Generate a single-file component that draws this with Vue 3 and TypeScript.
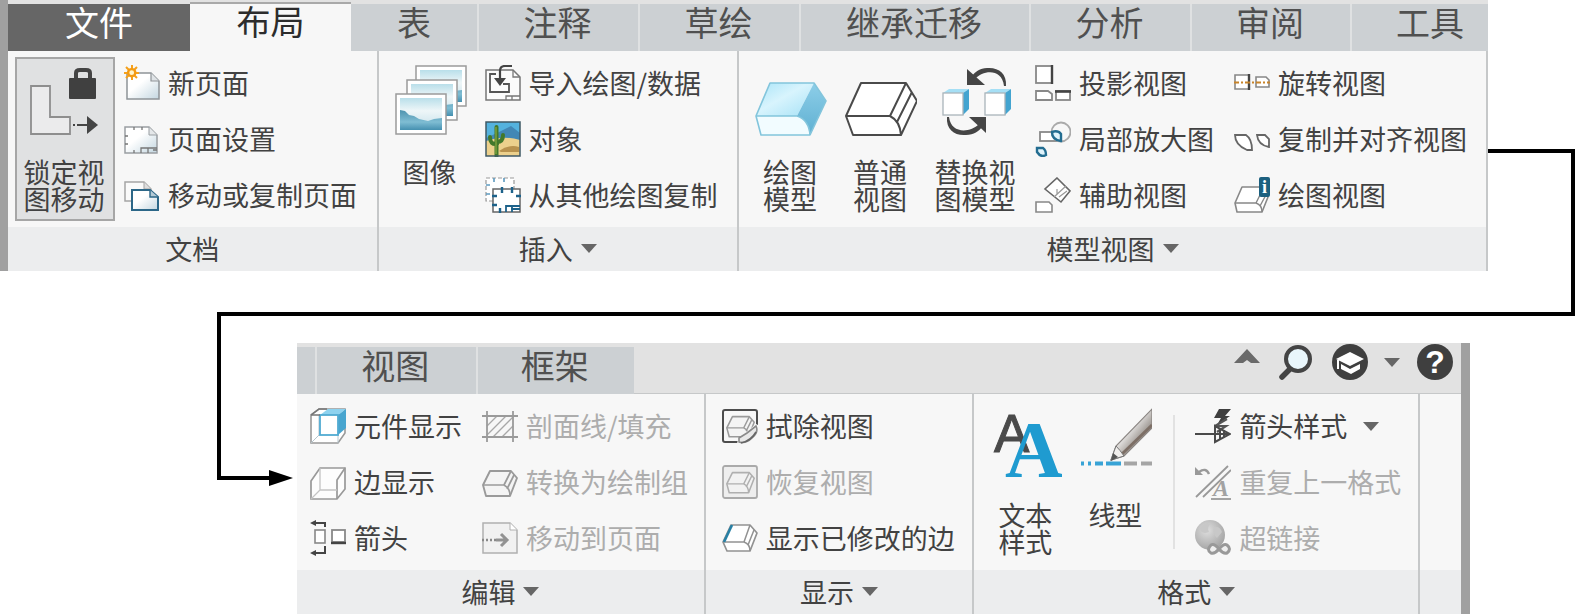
<script setup lang="ts">
interface Command {
  id: string
  label: string[]
  disabled?: boolean
  active?: boolean
  wide?: boolean
  menu?: boolean
}

interface Group {
  title: string
  menu: boolean
  share: number
  large: Command[]
  separated?: boolean
  columns: Command[][]
}

interface Tab {
  label: string
  share: number
  kind?: 'file' | 'current' | 'cut'
}

interface Letter {
  text: string
  x: number
  y: number
  size: number
  kind: string
}

// Letters that are part of an icon, in the icon's own units
const letters: Record<string, Letter[]> = {
  'text-style': [
    { text: 'A', x: 4, y: 44, size: 53, kind: 'letter-plain' },
    { text: 'A', x: 15, y: 69, size: 80, kind: 'letter-blue' },
  ],
  'drawing-view': [{ text: 'i', x: 28, y: 16, size: 18, kind: 'letter-info' }],
  repeat: [{ text: 'A', x: 18, y: 32, size: 24, kind: 'letter-faded' }],
}

const upperTabs: Tab[] = [
  { label: '文件', share: 182, kind: 'file' },
  { label: '布局', share: 161, kind: 'current' },
  { label: '表', share: 126 },
  { label: '注释', share: 161 },
  { label: '草绘', share: 161 },
  { label: '继承迁移', share: 230 },
  { label: '分析', share: 161 },
  { label: '审阅', share: 160 },
  { label: '工具', share: 138, kind: 'cut' },
]

const lowerTabs: Tab[] = [
  { label: '视图', share: 160 },
  { label: '框架', share: 158 },
]

const upperGroups: Group[] = [
  {
    title: '文档',
    menu: false,
    share: 370,
    large: [{ id: 'lock', label: ['锁定视', '图移动'], active: true, wide: true }],
    columns: [
      [
        { id: 'new-page', label: ['新页面'] },
        { id: 'page-setup', label: ['页面设置'] },
        { id: 'copy-page', label: ['移动或复制页面'] },
      ],
    ],
  },
  {
    title: '插入',
    menu: true,
    share: 360,
    large: [{ id: 'images', label: ['图像'] }],
    columns: [
      [
        { id: 'import', label: ['导入绘图/数据'] },
        { id: 'object', label: ['对象'] },
        { id: 'copy-drawing', label: ['从其他绘图复制'] },
      ],
    ],
  },
  {
    title: '模型视图',
    menu: true,
    share: 750,
    large: [
      { id: 'model', label: ['绘图', '模型'] },
      { id: 'general', label: ['普通', '视图'] },
      { id: 'replace', label: ['替换视', '图模型'], wide: true },
    ],
    columns: [
      [
        { id: 'projection', label: ['投影视图'] },
        { id: 'detail', label: ['局部放大图'] },
        { id: 'auxiliary', label: ['辅助视图'] },
      ],
      [
        { id: 'revolved', label: ['旋转视图'] },
        { id: 'align', label: ['复制并对齐视图'] },
        { id: 'drawing-view', label: ['绘图视图'] },
      ],
    ],
  },
]

const lowerGroups: Group[] = [
  {
    title: '编辑',
    menu: true,
    share: 409,
    large: [],
    columns: [
      [
        { id: 'component', label: ['元件显示'] },
        { id: 'edge', label: ['边显示'] },
        { id: 'arrows', label: ['箭头'] },
      ],
      [
        { id: 'hatch', label: ['剖面线/填充'], disabled: true },
        { id: 'convert', label: ['转换为绘制组'], disabled: true },
        { id: 'to-page', label: ['移动到页面'], disabled: true },
      ],
    ],
  },
  {
    title: '显示',
    menu: true,
    share: 268,
    large: [],
    columns: [
      [
        { id: 'erase', label: ['拭除视图'] },
        { id: 'restore', label: ['恢复视图'], disabled: true },
        { id: 'modified', label: ['显示已修改的边'] },
      ],
    ],
  },
  {
    title: '格式',
    menu: true,
    share: 446,
    separated: true,
    large: [
      { id: 'text-style', label: ['文本', '样式'] },
      { id: 'line-style', label: ['线型'] },
    ],
    columns: [
      [
        { id: 'arrow-style', label: ['箭头样式'], menu: true },
        { id: 'repeat', label: ['重复上一格式'], disabled: true },
        { id: 'link', label: ['超链接'], disabled: true },
      ],
    ],
  },
]

const ribbons = [
  { key: 'upper', tabs: upperTabs, groups: upperGroups },
  { key: 'lower', tabs: lowerTabs, groups: lowerGroups },
]
</script>

<template>
  <main class="page">
    <svg class="sprite" width="0" height="0" aria-hidden="true">
      <defs>
        <linearGradient id="g-paper" x1="0" y1="0" x2="1" y2="1">
          <stop offset="0.4" stop-color="#ffffff" />
          <stop offset="1" stop-color="#c3d6e0" />
        </linearGradient>
        <linearGradient id="g-ice" x1="0" y1="0" x2="1" y2="1">
          <stop offset="0" stop-color="#a9e4f8" />
          <stop offset="0.45" stop-color="#d8f4fd" />
          <stop offset="1" stop-color="#a5e1f6" />
        </linearGradient>
        <linearGradient id="g-side" x1="0" y1="0" x2="0" y2="1">
          <stop offset="0" stop-color="#8dcee8" />
          <stop offset="1" stop-color="#5fb0d2" />
        </linearGradient>
        <linearGradient id="g-sky" x1="0" y1="0" x2="0" y2="1">
          <stop offset="0" stop-color="#b9dfea" />
          <stop offset="0.4" stop-color="#eef6f8" />
          <stop offset="1" stop-color="#c2dfe9" />
        </linearGradient>
        <linearGradient id="g-lake" x1="0" y1="0" x2="0" y2="1">
          <stop offset="0" stop-color="#4e93ae" />
          <stop offset="0.6" stop-color="#7fbdd3" />
          <stop offset="1" stop-color="#4590b0" />
        </linearGradient>
        <linearGradient id="g-pen" x1="0" y1="0" x2="1" y2="1">
          <stop offset="0.35" stop-color="#ffffff" />
          <stop offset="0.7" stop-color="#8d8680" />
        </linearGradient>
        <radialGradient id="g-globe" cx="0.4" cy="0.35" r="0.7">
          <stop offset="0" stop-color="#dedede" />
          <stop offset="1" stop-color="#a2a2a2" />
        </radialGradient>
      </defs>

      <symbol id="i-lock" viewBox="0 0 72 72">
        <path d="M2 21H21V52H41V69H2Z" fill="#ebebec" stroke="#8e8e8e" stroke-width="1.8" />
        <path d="M47 15V8q0-3 4-3h6q4 0 4 3v7" fill="none" stroke="#444" stroke-width="4" />
        <rect x="40" y="13" width="27" height="21" rx="1" fill="#404040" />
        <path d="M44 60h2M48 60h10" stroke="#444" stroke-width="2" />
        <path d="M58 51L69 60L58 69Z" fill="#444" />
      </symbol>
      <symbol id="i-new-page" viewBox="0 0 36 36">
        <path d="M3 8H27L35 16V34H3Z" fill="url(#g-paper)" stroke="#8f9498" stroke-width="1.5" />
        <path d="M27 8V16H35" fill="#dfe3e6" stroke="#8f9498" stroke-width="1.2" />
        <path d="M8 0V15M0 8H15M2 2L13 13M13 2L2 13" stroke="#f5a11c" stroke-width="2" />
        <circle cx="7.700" cy="7.700" r="3.600" fill="#fff3c8" stroke="#f39a12" stroke-width="2.400" />
      </symbol>
      <symbol id="i-page-setup" viewBox="0 0 36 36">
        <path d="M1 6H25L33 14V32H1Z" fill="url(#g-paper)" stroke="#9a9fa3" stroke-width="1.5" />
        <path d="M25 6V14H33" fill="#e4e7e9" stroke="#9a9fa3" />
        <path d="M10 6v3M18 6v3M1 15h3M1 23h3M10 32v-3M17 32V27H33M24 27v5M29 29h4" stroke="#777" stroke-width="1.300" fill="none" />
      </symbol>
      <symbol id="i-copy-page" viewBox="0 0 36 36">
        <path d="M1 5H20L27 12V24H1Z" fill="#fafafa" stroke="#a5a5a5" stroke-width="1.500" />
        <path d="M20 5V12H27" fill="#ddd" stroke="#a5a5a5" />
        <path d="M8 13H26L34 20V33H8Z" fill="url(#g-paper)" stroke="#2c6788" stroke-width="2" />
        <path d="M26 13V20H34" fill="#b4cad6" stroke="#2c6788" stroke-width="1.400" />
      </symbol>
      <symbol id="i-photo" viewBox="0 0 52 42">
        <rect x="1" y="1" width="50" height="40" fill="#fff" stroke="#9b9b9b" stroke-width="1.500" />
        <rect x="5" y="5" width="42" height="32" fill="url(#g-sky)" />
        <path d="M5 17L10 18L14 22L19 23L24 26L33 28L39 26L47 25V37H5Z" fill="url(#g-lake)" />
      </symbol>
      <symbol id="i-images" viewBox="0 0 72 72">
        <use href="#i-photo" x="20" y="0" width="52" height="42" />
        <use href="#i-photo" x="11" y="14" width="52" height="42" />
        <use href="#i-photo" x="0" y="28" width="52" height="42" />
      </symbol>
      <symbol id="i-import" viewBox="0 0 36 36">
        <path d="M1 5H28L35 12V35H1Z" fill="#fbfbfb" stroke="#777" stroke-width="1.500" />
        <path d="M28 5V12H35M21 35V31H35M27 31v4" fill="none" stroke="#777" stroke-width="1.300" />
        <path d="M11 9H5V27H24V19H18" fill="none" stroke="#555" stroke-width="1.800" />
        <path d="M27 1H20Q15 1 15 6V14" fill="none" stroke="#444" stroke-width="2.200" />
        <path d="M9 13H21L15 21Z" fill="#444" />
      </symbol>
      <symbol id="i-object" viewBox="0 0 36 36">
        <rect x="1" y="1" width="34" height="34" fill="#54b2de" />
        <path d="M1 17L12 12L26 5L35 12V22H1Z" fill="#4287b5" />
        <path d="M1 20Q18 14 35 19V35H1Z" fill="#ecd08c" />
        <path d="M14 30Q24 23 34 26V31H16Z" fill="#b8924e" />
        <path d="M11.500 35V6M12 23Q5 24 5 16M12 21Q18 21 18 14" fill="none" stroke="#42782b" stroke-width="4" stroke-linecap="round" />
        <path d="M11 33V6" stroke="#8cab42" stroke-width="1.200" />
        <rect x="1" y="1" width="34" height="34" fill="none" stroke="#3f5966" stroke-width="1.500" />
      </symbol>
      <symbol id="i-copy-drawing" viewBox="0 0 36 36">
        <rect x="1" y="1" width="28" height="23" fill="#fff" stroke="#999" stroke-width="1.200" stroke-dasharray="4 2" />
        <path d="M9 1v4M19 1v4M1 8h4M1 17h4" stroke="#5d9ac0" stroke-width="1.600" />
        <rect x="8" y="12" width="27" height="23" fill="#fff" stroke="#666" stroke-width="1.500" />
        <path d="M17 10v6M27 10v6M7 19h5M7 28h5M31 19h5M15 36v-5" stroke="#1d628a" stroke-width="2.400" />
        <path d="M21 35V29H35M26 32H35M27 30v5" stroke="#1d628a" stroke-width="1.800" fill="none" />
      </symbol>
      <symbol id="i-model" viewBox="0 0 72 72">
        <path d="M15 18H59L42 51H1Z" fill="url(#g-ice)" />
        <path d="M59 18L71 36L55 70Q54 55 42 51Z" fill="url(#g-side)" />
        <path d="M1 51H42Q54 55 55 70H6Z" fill="#f2fcff" />
        <path d="M15 18H59L71 36L55 70H6L1 51ZM1 51H42Q54 55 55 70" fill="none" stroke="#83c5dc" stroke-width="1.600" stroke-linejoin="round" />
      </symbol>
      <symbol id="i-general" viewBox="0 0 72 72">
        <path d="M16 18H61L72 36L56 70H8L1 51Z" fill="#fff" />
        <path d="M16 18H61L72 36L56 70H8L1 51ZM1 51H45Q55 56 56 70M45 51L61 18M52 57L67 27" fill="none" stroke="#4a4a4a" stroke-width="2" stroke-linejoin="round" />
      </symbol>
      <symbol id="i-cube" viewBox="0 0 28 28">
        <path d="M1 5L7 1H27L21 5Z" fill="#a5dff5" />
        <path d="M21 5L27 1V21L21 27Z" fill="#43a4d0" />
        <rect x="1" y="5" width="20" height="22" fill="#fff" stroke="#aab4ba" stroke-width="1.300" />
      </symbol>
      <symbol id="i-replace" viewBox="0 0 72 72">
        <use href="#i-cube" x="2" y="23" width="28" height="28" />
        <use href="#i-cube" x="44" y="23" width="28" height="28" />
        <path d="M66 21C67 8 58 2 47 3C40 3 35 7 32 11L35 14C43 5 62 3 64 21Z" fill="#454545" />
        <path d="M27 4V20H45Z" fill="#454545" />
        <path d="M7 52C6 65 15 71 26 70C34 70 39 66 42 62L39 59C30 68 11 69 9 52Z" fill="#454545" />
        <path d="M46 68V52H29Z" fill="#454545" />
      </symbol>
      <symbol id="i-projection" viewBox="0 0 36 36">
        <rect x="1" y="1" width="16" height="17" fill="#fff" stroke="#888" stroke-width="1.800" />
        <path d="M17 0V19" stroke="#444" stroke-width="2.400" />
        <path d="M1 26H13L17 29V35H1Z" fill="#fff" stroke="#888" stroke-width="1.800" />
        <rect x="21" y="26" width="14" height="9" fill="#fff" stroke="#888" stroke-width="1.800" />
        <path d="M20 26.500H36" stroke="#444" stroke-width="2.600" />
      </symbol>
      <symbol id="i-detail" viewBox="0 0 36 36">
        <rect x="5" y="11" width="19" height="9" fill="#fff" stroke="#888" stroke-width="1.800" />
        <circle cx="26" cy="11" r="9.500" fill="none" stroke="#aaa" stroke-width="1.800" />
        <path d="M17 11Q17 19 26 20V13Q23 9 17 11Z" fill="#dff3fb" stroke="#236d91" stroke-width="2.400" />
        <path d="M2 27H8Q11 29 11 34Q6 37 2 31Z" fill="#dff3fb" stroke="#236d91" stroke-width="2.400" />
      </symbol>
      <symbol id="i-auxiliary" viewBox="0 0 36 36">
        <path d="M22 1L35 14L26 25L10 12Z" fill="#fff" stroke="#666" stroke-width="1.600" />
        <path d="M19 20L31 9M22 17V12M24 20L32 14" stroke="#999" stroke-width="1.200" />
        <path d="M1 25H14L17 28V35H1Z" fill="#fff" stroke="#888" stroke-width="1.600" />
      </symbol>
      <symbol id="i-revolved" viewBox="0 0 36 36">
        <path d="M1 10H15V24H1Z" fill="#fff" stroke="#888" stroke-width="1.600" />
        <path d="M15 9V25" stroke="#444" stroke-width="2.400" />
        <path d="M22 12H32L35 15V22H22Z" fill="#fff" stroke="#888" stroke-width="1.600" />
        <path d="M0 17.500H36" stroke="#c8842a" stroke-width="2" stroke-dasharray="5 2 2 2" />
      </symbol>
      <symbol id="i-align" viewBox="0 0 36 36">
        <path d="M1 14H12Q18 18 18 29H13Q1 24 1 14Z" fill="#fff" stroke="#666" stroke-width="1.800" />
        <path d="M23 14H31L35 18V26Q24 24 23 14Z" fill="#fff" stroke="#666" stroke-width="1.800" />
      </symbol>
      <symbol id="i-drawing-view" viewBox="0 0 36 36">
        <path d="M8 10H31L34 20L28 35H3L1 26Z" fill="#fff" stroke="#888" stroke-width="1.600" stroke-linejoin="round" />
        <path d="M1 26H22Q28 28 28 35M22 26L29 12M26 29L33 16" fill="none" stroke="#888" stroke-width="1.400" />
        <rect x="25" y="0" width="11" height="20" rx="2" fill="#1c607f" />
      </symbol>

      <symbol id="i-component" viewBox="0 0 36 36">
        <path d="M1 7L9 1H35V25L28 35H1Z" fill="#fff" stroke="#999" stroke-width="1.600" />
        <path d="M1 35L9 27V7M28 35V27" fill="none" stroke="#b6c5cd" />
        <path d="M10 7L18 1H36L28 7Z" fill="#8dd2ef" />
        <path d="M28 7L36 1V20L28 27Z" fill="#48a5cf" />
        <rect x="10" y="7" width="18" height="20" fill="#fff" stroke="#51abd2" stroke-width="1.800" />
        <path d="M1 7H10M1 7L9 1H17" fill="none" stroke="#777" stroke-width="1.500" />
      </symbol>
      <symbol id="i-edge" viewBox="0 0 36 36">
        <path d="M1 17L10 4H35V25L27 35H1Z" fill="#fdfdfd" stroke="#999" stroke-width="1.700" />
        <path d="M27 35V16L35 4" fill="none" stroke="#999" stroke-width="1.700" />
        <path d="M10 4V26L1 35M10 26H27" fill="none" stroke="#c4c4c4" stroke-width="1.300" />
      </symbol>
      <symbol id="i-arrows" viewBox="0 0 36 36">
        <rect x="5" y="10" width="10" height="13" fill="#fff" stroke="#888" stroke-width="1.600" />
        <rect x="22" y="10" width="13" height="12" fill="#fff" stroke="#888" stroke-width="1.800" />
        <path d="M21 23H36" stroke="#444" stroke-width="2.400" />
        <path d="M15 7V3H4M15 26V33H4" fill="none" stroke="#444" stroke-width="2" />
        <path d="M0 3L6 0V6ZM0 33L6 30V36Z" fill="#444" />
      </symbol>
      <symbol id="i-hatch" viewBox="0 0 36 36">
        <path d="M5 18L15 8M5 27L24 8M11 29L31 9M20 29L31 18" stroke="#a8a8a8" stroke-width="1.300" />
        <path d="M0 8H36M0 29H36M5 3V34M31 3V34" stroke="#9a9a9a" stroke-width="1.800" />
      </symbol>
      <symbol id="i-box" viewBox="0 0 36 36">
        <path d="M8 7H29L35 14L28 32H4L1 21Z" fill="#f4f4f4" stroke="#9a9a9a" stroke-width="1.900" stroke-linejoin="round" />
        <path d="M1 21H22Q28 24 28 32M22 21L29 7M25 25L32 11" fill="none" stroke="#9a9a9a" stroke-width="1.700" />
      </symbol>
      <symbol id="i-convert" viewBox="0 0 36 36"><use href="#i-box" width="36" height="36" /></symbol>
      <symbol id="i-to-page" viewBox="0 0 36 36">
        <path d="M1 3H28L35 10V33H1Z" fill="#f1f1f1" stroke="#b0b0b0" stroke-width="1.500" />
        <path d="M28 3V10H35" fill="#fff" stroke="#b0b0b0" />
        <path d="M0 20H14" stroke="#888" stroke-width="2.400" stroke-dasharray="2 2" />
        <path d="M14 20H25M19 14L25 20L19 26" fill="none" stroke="#929292" stroke-width="3" />
      </symbol>
      <symbol id="i-erase" viewBox="0 0 36 36">
        <rect x="1" y="2" width="34" height="32" rx="2" fill="#f8f8f8" stroke="#4d4d4d" stroke-width="2" />
        <use href="#i-box" x="4" y="3" width="29" height="29" />
        <path d="M16 31L34 16L38 18V36H15Z" fill="#f7f7f7" />
        <path d="M17 30L25 25L34 18Q37 24 30 30Q24 36 17 34Z" fill="#e8e8e8" stroke="#8a8a8a" stroke-width="1.600" />
        <path d="M19 35Q29 33 34 24" fill="none" stroke="#666" stroke-width="1.600" />
      </symbol>
      <symbol id="i-restore" viewBox="0 0 36 36">
        <rect x="1" y="2" width="34" height="32" rx="2" fill="#eee" stroke="#aaa" stroke-width="1.800" />
        <use href="#i-box" x="4" y="3" width="29" height="29" opacity="0.750" />
      </symbol>
      <symbol id="i-modified" viewBox="0 0 36 36">
        <path d="M9 5H28L35 13L28 31H5L1 22Z" fill="#fff" stroke="#929292" stroke-width="1.700" stroke-linejoin="round" />
        <path d="M1 22H22Q28 24 28 31M22 22L28 5M26 25L32 10" fill="none" stroke="#929292" stroke-width="1.500" />
        <path d="M10 5L2 22" stroke="#2780a5" stroke-width="2.600" />
      </symbol>
      <symbol id="i-text-style" viewBox="0 0 72 72"></symbol>
      <symbol id="i-line-style" viewBox="0 0 72 72">
        <path d="M31 52L36 38L72 1V20L44 48Z" fill="url(#g-pen)" stroke="#8a8582" stroke-width="1.200" />
        <path d="M42 46L72 17" stroke="#7d6f66" stroke-width="3" />
        <path d="M36 38Q40 42 44 48L31 52Z" fill="#f1efed" stroke="#777" />
        <path d="M31 53L33 45L38 49Z" fill="#555" />
        <path d="M1 55.500H4M8 55.500H11M15 55.500H23M26 55.500H41" stroke="#38a3d6" stroke-width="4" />
        <path d="M44 55.500H57M61 55.500H72" stroke="#a5a5a5" stroke-width="4" />
      </symbol>
      <symbol id="i-arrow-style" viewBox="0 0 36 36">
        <path d="M24 1H36L30 8H35L22 17L26 10H19Z" fill="#3f3f3f" />
        <path d="M20 18L32 11M20 18H31L22 24" stroke="#555" stroke-width="2.200" fill="none" />
        <path d="M0 26H35M20 18V34L35 26ZM25 20V32M29 22V30" fill="none" stroke="#4a4a4a" stroke-width="2" />
      </symbol>
      <symbol id="i-repeat" viewBox="0 0 36 36">
        <path d="M1 33L33 2M8 33L36 6" stroke="#999" stroke-width="1.800" />
        <path d="M14 10Q11 3 4 8" fill="none" stroke="#999" stroke-width="2.400" />
        <path d="M0 3V11H8Z" fill="#999" />
        <path d="M16 35H36" stroke="#999" stroke-width="1.800" />
      </symbol>
      <symbol id="i-link" viewBox="0 0 36 36">
        <circle cx="15" cy="15" r="15" fill="url(#g-globe)" />
        <path d="M5 8Q11 1 15 4Q12 8 14 12Q6 15 5 8ZM19 8Q24 5 27 12L22 18Q17 13 19 8Z" fill="#c8c8c8" />
        <path d="M24 29Q19 23 16 25Q11 30 16 33Q20 34 24 29Q29 23 32 25Q37 29 32 33Q28 34 24 29Z" fill="#eee" stroke="#999" stroke-width="3" />
      </symbol>
      <symbol id="i-caret" viewBox="0 0 16 9"><path d="M0 0H16L8 9Z" fill="#666" /></symbol>
      <symbol id="i-collapse" viewBox="0 0 26 14"><path d="M0 14L13 0L26 14H17L13 11L9 14Z" fill="#6a6a6a" /></symbol>
      <symbol id="i-search" viewBox="0 0 36 36">
        <path d="M3 33L12 24" stroke="#444" stroke-width="5.500" stroke-linecap="round" />
        <circle cx="19" cy="15" r="12" fill="#e9f6fb" stroke="#444" stroke-width="4" />
      </symbol>
      <symbol id="i-learn" viewBox="0 0 36 36">
        <circle cx="18" cy="18" r="18" fill="#3f3f3f" />
        <path d="M4 15L18 8L32 15L18 22Z" fill="#fff" />
        <path d="M9 20L18 25L28 20V25L19 30L9 25Z" fill="#fff" />
        <path d="M6 16V25" stroke="#fff" stroke-width="2" />
      </symbol>
    </svg>

    <div v-for="ribbon in ribbons" :key="ribbon.key" class="row" :class="ribbon.key">
      <div v-if="ribbon.key === 'lower'" class="link-in" aria-hidden="true">
        <svg class="arrow-head" viewBox="0 0 24 16"><path d="M0 0L24 8L0 16Z" fill="#000" /></svg>
      </div>

      <section class="ribbon">
        <header class="tab-bar">
          <div class="tabs" role="tablist">
            <span v-if="ribbon.key === 'lower'" class="tab-stub"></span>
            <button
              v-for="tab in ribbon.tabs"
              :key="tab.label"
              type="button"
              role="tab"
              class="tab"
              :class="tab.kind"
              :aria-selected="tab.kind === 'current'"
              :style="{ flexGrow: tab.share }"
            >{{ tab.label }}</button>
          </div>
          <div v-if="ribbon.key === 'lower'" class="tools">
            <button type="button" class="fold" aria-label="collapse">
              <svg class="collapse"><use href="#i-collapse" /></svg>
            </button>
            <button type="button" aria-label="search"><svg class="round"><use href="#i-search" /></svg></button>
            <button type="button" class="learn" aria-label="learn">
              <svg class="round"><use href="#i-learn" /></svg>
              <svg class="caret"><use href="#i-caret" /></svg>
            </button>
            <button type="button" class="help" aria-label="help">?</button>
          </div>
        </header>

        <div class="groups">
          <section
            v-for="group in ribbon.groups"
            :key="group.title"
            class="group"
            :style="{ flexGrow: group.share }"
          >
            <div class="commands" :class="{ plain: !group.large.length }">
              <div v-if="group.large.length" class="large-set">
                <button
                  v-for="cmd in group.large"
                  :key="cmd.id"
                  type="button"
                  class="large"
                  :class="{ active: cmd.active, wide: cmd.wide }"
                >
                  <svg class="icon-large" viewBox="0 0 72 72">
                    <use :href="'#i-' + cmd.id" />
                    <text
                      v-for="(l, n) in letters[cmd.id] ?? []"
                      :key="n"
                      :x="l.x"
                      :y="l.y"
                      :font-size="l.size"
                      :class="l.kind"
                    >{{ l.text }}</text>
                  </svg>
                  <span v-for="line in cmd.label" :key="line" class="line">{{ line }}</span>
                </button>
              </div>
              <div v-if="group.separated" class="separator"></div>
              <div class="columns">
                <div v-for="(column, n) in group.columns" :key="n" class="column">
                  <button
                    v-for="cmd in column"
                    :key="cmd.id"
                    type="button"
                    class="small"
                    :disabled="cmd.disabled"
                  >
                    <svg class="icon" viewBox="0 0 36 36">
                      <use :href="'#i-' + cmd.id" />
                      <text
                        v-for="(l, k) in letters[cmd.id] ?? []"
                        :key="k"
                        :x="l.x"
                        :y="l.y"
                        :font-size="l.size"
                        :class="l.kind"
                      >{{ l.text }}</text>
                    </svg>
                    <span class="label">{{ cmd.label[0] }}</span>
                    <svg v-if="cmd.menu" class="caret inline-caret"><use href="#i-caret" /></svg>
                  </button>
                </div>
              </div>
            </div>
            <button v-if="group.menu" type="button" class="title">
              {{ group.title }}<svg class="caret"><use href="#i-caret" /></svg>
            </button>
            <div v-else class="title">{{ group.title }}</div>
          </section>
          <div v-if="ribbon.key === 'lower'" class="filler"></div>
        </div>
      </section>

      <div v-if="ribbon.key === 'upper'" class="link-out" aria-hidden="true"></div>
    </div>
  </main>
</template>

<style>
body {
  margin: 0;
  background: #fff;
}
</style>

<style scoped>
.page {
  display: flex;
  flex-direction: column;
  overflow: hidden;
  color: #424242;
  font-family: "Noto Sans CJK SC", sans-serif;
  font-size: 27px;
  line-height: 27px;
}

.sprite {
  position: absolute;
}

button {
  margin: 0;
  padding: 0;
  border: 0;
  background: none;
  color: inherit;
  font: inherit;
  white-space: nowrap;
}

.row {
  display: flex;
}

.ribbon {
  box-sizing: border-box;
  flex: 1;
  min-width: 0;
  background: #f7f7f7;
}

.upper .ribbon {
  border-left: 8px solid #a0a0a0;
}

.lower .ribbon {
  grid-column: 3;
  grid-row: 3;
  margin-right: 105px;
  border-right: 9px solid #a0a0a0;
}

/* Connector running from the upper ribbon to the lower one */
.link-out {
  width: 83px;
  margin-top: 149px;
  border: solid #000;
  border-width: 4px 4px 0 0;
}

.lower {
  display: grid;
  grid-template-columns: 217px 80px 1fr;
  grid-template-rows: 45px 27px auto;
}

.lower::before {
  content: "";
  grid-column: 2 / 4;
  grid-row: 1;
  border: solid #000;
  border-width: 0 4px 4px 0;
}

.link-in {
  display: flex;
  justify-content: flex-end;
  align-items: flex-end;
  grid-column: 2;
  grid-row: 2 / 4;
  height: 168px;
  margin: -4px 4px 0 0;
  border-left: 4px solid #000;
  background: linear-gradient(#000, #000) left bottom / 52px 4px no-repeat;
}

.arrow-head {
  width: 24px;
  height: 16px;
  margin-bottom: -6px;
}

/* Tabs */
.tab-bar {
  display: flex;
  justify-content: space-between;
  height: 51px;
  box-sizing: border-box;
  border-bottom: 1px solid #c6c8c9;
  background: #e2e2e2;
}

.tabs {
  display: flex;
  flex: 1;
  margin-bottom: -1px;
  padding-top: 4px;
}

.lower .tabs {
  flex: 0 1 337px;
}

.tab-stub {
  width: 18px;
  background: #ccd0d3;
}

.tab {
  flex: 1 1 0;
  box-sizing: border-box;
  min-width: 0;
  padding-bottom: 12px;
  background: #ccd0d3;
  box-shadow: inset 2px 0 #dfe1e2;
  color: #505050;
  font-size: 34px;
  line-height: 34px;
}

.tab.file {
  background: #666;
  box-shadow: none;
  color: #fff;
}

.tab.current {
  margin-top: -2px;
  background: #f7f7f7;
  box-shadow: inset 0 2px #a9a9a9;
  color: #2c2c2c;
}

.tab.current + .tab {
  box-shadow: none;
}

.tab.cut {
  text-indent: 22px;
}

.tools {
  display: flex;
  align-items: flex-start;
  gap: 17px;
  padding: 1px 8px 0 0;
}

.tools button {
  display: flex;
  align-items: center;
  height: 36px;
}

.tools .fold {
  height: 24px;
  margin-right: 2px;
}

.tools .help {
  justify-content: center;
  width: 36px;
  border-radius: 50%;
  background: #3f3f3f;
  color: #fff;
  font: 700 32px/36px "Liberation Sans", sans-serif;
}

.learn {
  gap: 16px;
}

.round {
  width: 36px;
  height: 36px;
}

.collapse {
  width: 26px;
  height: 14px;
}

.caret {
  width: 16px;
  height: 9px;
}

/* Groups */
.groups {
  display: flex;
}

.group {
  display: flex;
  flex: 1 1 0;
  flex-direction: column;
  box-sizing: border-box;
  min-width: 0;
  border-right: 2px solid #c6c8c9;
}

.commands {
  display: flex;
  align-items: flex-start;
  gap: 9px;
  height: 176px;
  box-sizing: border-box;
  padding: 4px 0 0 7px;
}

.commands.plain {
  padding-left: 13px;
}

.group + .group .commands.plain {
  padding-left: 16px;
}

.large-set {
  display: flex;
  padding-top: 2px;
}

.large {
  display: flex;
  flex-direction: column;
  align-items: center;
  box-sizing: border-box;
  width: 90px;
  min-height: 164px;
  padding: 7px 0;
  border: 1px solid transparent;
}

.large.wide {
  width: 100px;
}

.large.active {
  border: 2px solid #a6a6a6;
  padding: 6px 0;
  background: #e0e1e2;
}

.icon-large {
  width: 72px;
  height: 72px;
  margin-bottom: 21px;
}

.line {
  display: block;
  padding-right: 2px;
}

.separator {
  width: 2px;
  height: 134px;
  margin: 17px 11px 0 3px;
  background: #e2e2e2;
}

.columns {
  display: flex;
  gap: 20px;
}

.column {
  display: flex;
  flex-direction: column;
}

.small {
  display: flex;
  align-items: center;
  gap: 8px;
  height: 56px;
}

.small:disabled {
  color: #adadad;
}

.label {
  padding-bottom: 2px;
}

.icon {
  flex: none;
  width: 36px;
  height: 36px;
}

.inline-caret {
  margin-left: 8px;
}

.title {
  display: flex;
  align-items: center;
  justify-content: center;
  gap: 8px;
  width: 100%;
  height: 44px;
  box-sizing: border-box;
  padding-bottom: 2px;
  background: #ecedee;
}

.filler {
  width: 41px;
  background: linear-gradient(#f7f7f7 176px, #ecedee 176px);
}

/* Letters inside icons */
.letter-plain {
  fill: #4a4a4a;
  stroke: #4a4a4a;
  font-family: "Liberation Sans", sans-serif;
}

.letter-blue {
  fill: #1f9bd0;
  font-family: "Liberation Serif", serif;
  font-weight: 700;
}

.letter-info {
  fill: #fff;
  font-family: "Liberation Serif", serif;
  font-weight: 700;
}

.letter-faded {
  fill: #a2a2a2;
  font-family: "Liberation Serif", serif;
  font-style: italic;
  font-weight: 700;
}
</style>
